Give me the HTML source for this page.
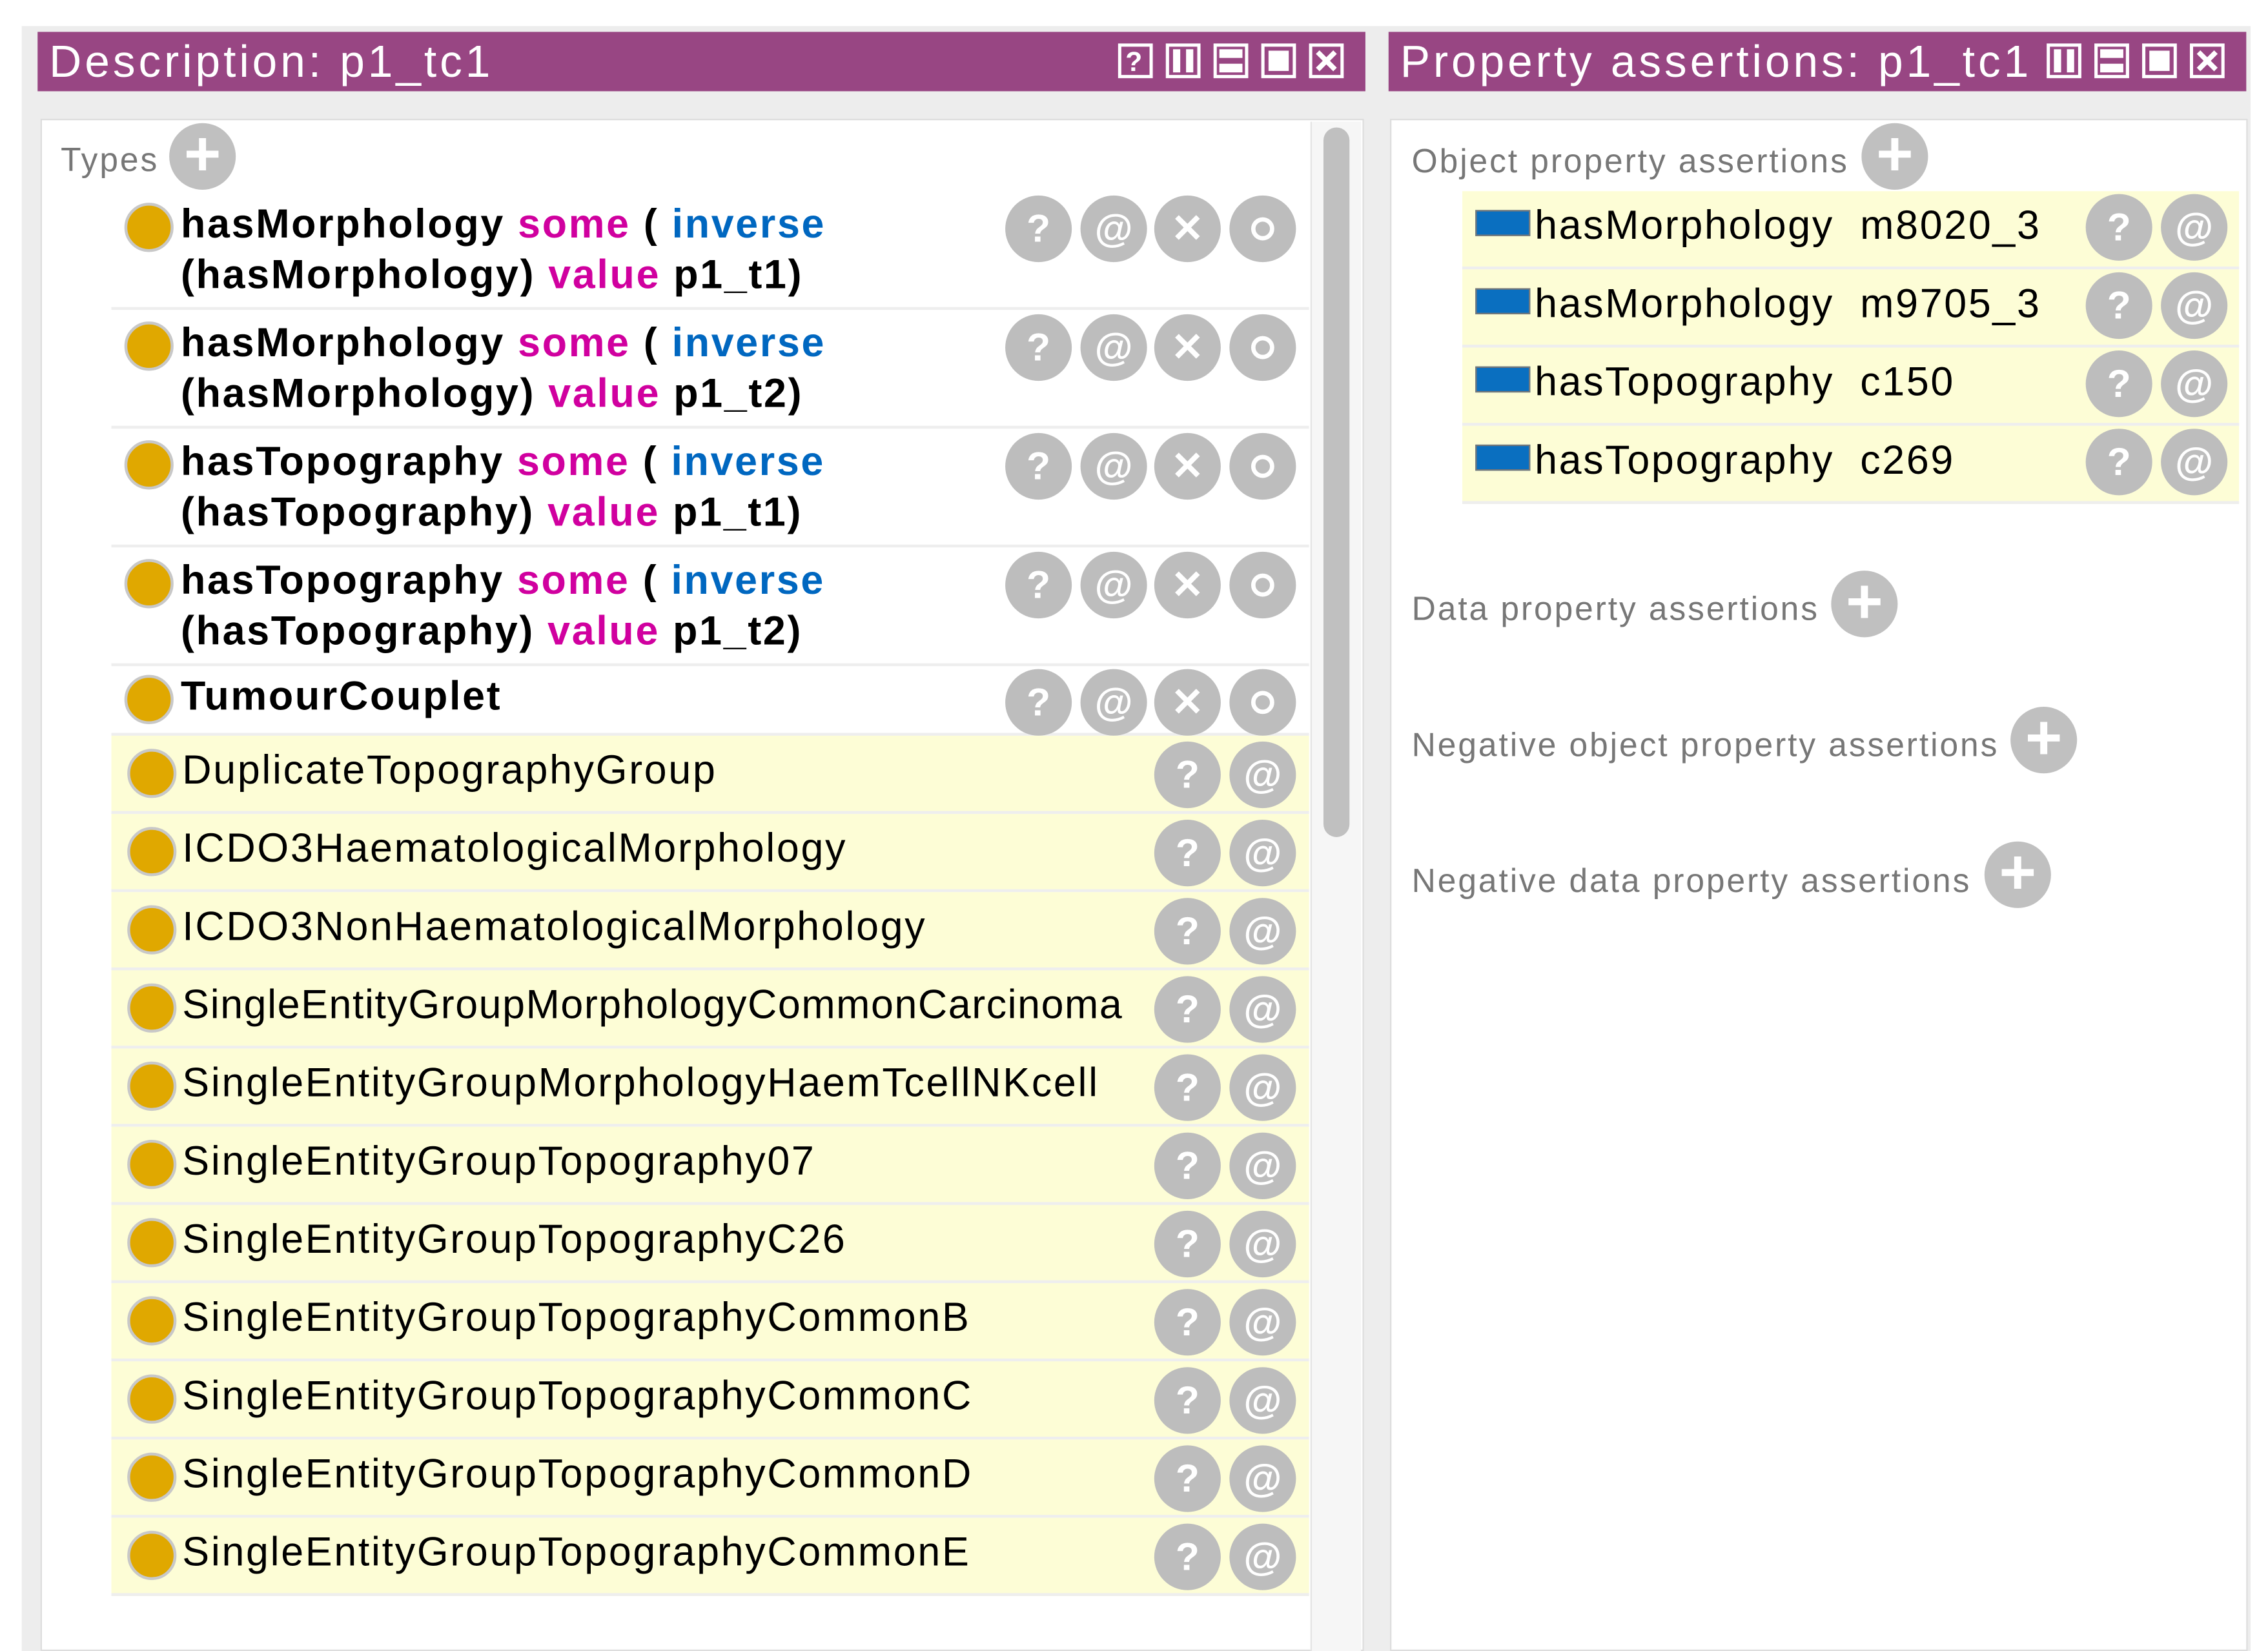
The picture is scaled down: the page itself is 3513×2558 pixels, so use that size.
<!DOCTYPE html>
<html><head><meta charset="utf-8"><style>
html,body{margin:0;padding:0;background:#fff;width:3513px;height:2558px;overflow:hidden}
#w{position:absolute;left:0;top:0;width:1568px;height:1140px;transform-origin:0 0;transform:scale(2.2404,2.2439);font-family:"Liberation Sans",sans-serif}
.a{position:absolute}
.hdr{position:absolute;background:#984683;color:#fff;font-size:31px;line-height:41px;padding-left:8px;box-sizing:border-box;white-space:nowrap;letter-spacing:2.2px}
.ic{position:absolute;top:8px;width:24px;height:24px}
.b{position:absolute;width:46px;height:46px;border-radius:50%;background:#bdbdbd;color:#fff;font-size:27px;line-height:46px;text-align:center;font-weight:bold}
.ring{position:absolute;left:15px;top:15px;width:10px;height:10px;border:3px solid #fff;border-radius:50%}
.dot{position:absolute;width:30px;height:30px;border-radius:50%;background:#e0a800;border:2px solid #c8c8c8}
.row{position:absolute;left:77px;width:828px;border-bottom:2px solid #eee;box-sizing:border-box}
.t{position:absolute;left:48px;font-size:28px;color:#000;white-space:nowrap;letter-spacing:1.2px}
.t.bo{font-weight:bold;letter-spacing:1.2px}
.k{color:#d0009f}.v{color:#0067c0}
.lab{position:absolute;font-size:23px;color:#777;white-space:nowrap;letter-spacing:1.3px}
.plus{position:absolute;width:46px;height:46px;border-radius:50%;background:#c0c0c0;color:#fff;font-size:44px;line-height:44px;text-align:center;font-weight:bold}
.pr{position:absolute;left:1011px;width:537px;height:54px;background:#fdfdd6;border-bottom:2px solid #eee;box-sizing:border-box}
.sq{position:absolute;left:9px;top:13px;width:36px;height:16px;background:#0a6fc0;border:1px solid #777}
</style></head><body><div id="w">
<svg width="0" height="0" style="position:absolute"><defs>
<g id="iq"><rect x="1" y="1" width="22" height="22" fill="none" stroke="#fff" stroke-width="2.5"/><text x="12" y="19" font-size="19" font-weight="bold" fill="#fff" text-anchor="middle" font-family="Liberation Sans">?</text></g>
<g id="iv"><rect x="1" y="1" width="22" height="22" fill="none" stroke="#fff" stroke-width="2.5"/><rect x="5" y="4" width="5" height="16" fill="#fff"/><rect x="14" y="4" width="5" height="16" fill="#fff"/></g>
<g id="ih"><rect x="1" y="1" width="22" height="22" fill="none" stroke="#fff" stroke-width="2.5"/><rect x="4" y="4" width="16" height="6" fill="#fff"/><rect x="4" y="14" width="16" height="6" fill="#fff"/></g>
<g id="im"><rect x="1" y="1" width="22" height="22" fill="none" stroke="#fff" stroke-width="2.5"/><rect x="5" y="5" width="14" height="14" fill="#fff"/></g>
<g id="ix"><rect x="1" y="1" width="22" height="22" fill="none" stroke="#fff" stroke-width="2.5"/><path d="M6 6L18 18M18 6L6 18" stroke="#fff" stroke-width="3.5"/></g>
</defs></svg>
<div class="a" style="left:15px;top:18px;width:1541px;height:1122px;background:#ededed"></div>
<div class="hdr" style="left:26px;top:22px;width:918px">Description: p1_tc1
<svg class="ic" style="left:747px"><use href="#iq"/></svg><svg class="ic" style="left:780px"><use href="#iv"/></svg><svg class="ic" style="left:813px"><use href="#ih"/></svg><svg class="ic" style="left:846px"><use href="#im"/></svg><svg class="ic" style="left:879px"><use href="#ix"/></svg></div>
<div class="hdr" style="left:960px;top:22px;width:593px">Property assertions: p1_tc1
<svg class="ic" style="left:455px"><use href="#iv"/></svg><svg class="ic" style="left:488px"><use href="#ih"/></svg><svg class="ic" style="left:521px"><use href="#im"/></svg><svg class="ic" style="left:554px"><use href="#ix"/></svg></div>
<div class="a" style="left:28px;top:82px;width:915px;height:1058px;background:#fff;border:1px solid #ddd;box-sizing:border-box"></div>
<div class="a" style="left:906px;top:84px;width:34px;height:1056px;background:#f6f6f6;border-left:1px solid #e4e4e4"></div>
<div class="a" style="left:915px;top:88px;width:18px;height:490px;background:#c0c0c0;border-radius:9px"></div>
<div class="a" style="left:961px;top:82px;width:593px;height:1058px;background:#fff;border:1px solid #ddd;box-sizing:border-box"></div>
<div class="lab" style="left:42px;top:97px">Types</div><div class="plus" style="left:117px;top:85px">+</div>

<div class="row" style="top:135px;height:79px"><div class="dot" style="left:9px;top:5px"></div><div class="t bo" style="top:2px;line-height:35px">hasMorphology <span class="k">some</span> ( <span class="v">inverse</span><br>(hasMorphology) <span class="k">value</span> p1_t1)</div>
<div class="b" style="left:618px;top:0px">?</div><div class="b" style="left:670px;top:0">@</div><div class="b" style="left:721px;top:0">✕</div><div class="b" style="left:773px;top:0"><div class="ring"></div></div></div>
<div class="row" style="top:214px;height:82px"><div class="dot" style="left:9px;top:8px"></div><div class="t bo" style="top:5px;line-height:35px">hasMorphology <span class="k">some</span> ( <span class="v">inverse</span><br>(hasMorphology) <span class="k">value</span> p1_t2)</div>
<div class="b" style="left:618px;top:3px">?</div><div class="b" style="left:670px;top:3px">@</div><div class="b" style="left:721px;top:3px">✕</div><div class="b" style="left:773px;top:3px"><div class="ring"></div></div></div>
<div class="row" style="top:296px;height:82px"><div class="dot" style="left:9px;top:8px"></div><div class="t bo" style="top:5px;line-height:35px">hasTopography <span class="k">some</span> ( <span class="v">inverse</span><br>(hasTopography) <span class="k">value</span> p1_t1)</div>
<div class="b" style="left:618px;top:3px">?</div><div class="b" style="left:670px;top:3px">@</div><div class="b" style="left:721px;top:3px">✕</div><div class="b" style="left:773px;top:3px"><div class="ring"></div></div></div>
<div class="row" style="top:378px;height:82px"><div class="dot" style="left:9px;top:8px"></div><div class="t bo" style="top:5px;line-height:35px">hasTopography <span class="k">some</span> ( <span class="v">inverse</span><br>(hasTopography) <span class="k">value</span> p1_t2)</div>
<div class="b" style="left:618px;top:3px">?</div><div class="b" style="left:670px;top:3px">@</div><div class="b" style="left:721px;top:3px">✕</div><div class="b" style="left:773px;top:3px"><div class="ring"></div></div></div>
<div class="row" style="top:460px;height:48px"><div class="dot" style="left:9px;top:6px"></div><div class="t bo" style="top:3px;line-height:35px">TumourCouplet</div>
<div class="b" style="left:618px;top:2px">?</div><div class="b" style="left:670px;top:2px">@</div><div class="b" style="left:721px;top:2px">✕</div><div class="b" style="left:773px;top:2px"><div class="ring"></div></div></div>

<div class="row" style="top:508px;height:54px;background:#fdfdd6"><div class="dot" style="left:11px;top:9px"></div><div class="t" style="left:49px;top:8px">DuplicateTopographyGroup</div><div class="b" style="left:721px;top:4px">?</div><div class="b" style="left:773px;top:4px">@</div></div>
<div class="row" style="top:562px;height:54px;background:#fdfdd6"><div class="dot" style="left:11px;top:9px"></div><div class="t" style="left:49px;top:8px">ICDO3HaematologicalMorphology</div><div class="b" style="left:721px;top:4px">?</div><div class="b" style="left:773px;top:4px">@</div></div>
<div class="row" style="top:616px;height:54px;background:#fdfdd6"><div class="dot" style="left:11px;top:9px"></div><div class="t" style="left:49px;top:8px">ICDO3NonHaematologicalMorphology</div><div class="b" style="left:721px;top:4px">?</div><div class="b" style="left:773px;top:4px">@</div></div>
<div class="row" style="top:670px;height:54px;background:#fdfdd6"><div class="dot" style="left:11px;top:9px"></div><div class="t" style="left:49px;top:8px;letter-spacing:0.7px">SingleEntityGroupMorphologyCommonCarcinoma</div><div class="b" style="left:721px;top:4px">?</div><div class="b" style="left:773px;top:4px">@</div></div>
<div class="row" style="top:724px;height:54px;background:#fdfdd6"><div class="dot" style="left:11px;top:9px"></div><div class="t" style="left:49px;top:8px">SingleEntityGroupMorphologyHaemTcellNKcell</div><div class="b" style="left:721px;top:4px">?</div><div class="b" style="left:773px;top:4px">@</div></div>
<div class="row" style="top:778px;height:54px;background:#fdfdd6"><div class="dot" style="left:11px;top:9px"></div><div class="t" style="left:49px;top:8px">SingleEntityGroupTopography07</div><div class="b" style="left:721px;top:4px">?</div><div class="b" style="left:773px;top:4px">@</div></div>
<div class="row" style="top:832px;height:54px;background:#fdfdd6"><div class="dot" style="left:11px;top:9px"></div><div class="t" style="left:49px;top:8px">SingleEntityGroupTopographyC26</div><div class="b" style="left:721px;top:4px">?</div><div class="b" style="left:773px;top:4px">@</div></div>
<div class="row" style="top:886px;height:54px;background:#fdfdd6"><div class="dot" style="left:11px;top:9px"></div><div class="t" style="left:49px;top:8px">SingleEntityGroupTopographyCommonB</div><div class="b" style="left:721px;top:4px">?</div><div class="b" style="left:773px;top:4px">@</div></div>
<div class="row" style="top:940px;height:54px;background:#fdfdd6"><div class="dot" style="left:11px;top:9px"></div><div class="t" style="left:49px;top:8px">SingleEntityGroupTopographyCommonC</div><div class="b" style="left:721px;top:4px">?</div><div class="b" style="left:773px;top:4px">@</div></div>
<div class="row" style="top:994px;height:54px;background:#fdfdd6"><div class="dot" style="left:11px;top:9px"></div><div class="t" style="left:49px;top:8px">SingleEntityGroupTopographyCommonD</div><div class="b" style="left:721px;top:4px">?</div><div class="b" style="left:773px;top:4px">@</div></div>
<div class="row" style="top:1048px;height:54px;background:#fdfdd6"><div class="dot" style="left:11px;top:9px"></div><div class="t" style="left:49px;top:8px">SingleEntityGroupTopographyCommonE</div><div class="b" style="left:721px;top:4px">?</div><div class="b" style="left:773px;top:4px">@</div></div>

<div class="lab" style="left:976px;top:98px">Object property assertions</div><div class="plus" style="left:1287px;top:85px">+</div>
<div class="pr" style="top:132px"><div class="sq"></div><div class="t" style="left:50px;top:8px">hasMorphology&nbsp; m8020_3</div><div class="b" style="left:431px;top:2px">?</div><div class="b" style="left:483px;top:2px">@</div></div>
<div class="pr" style="top:186px"><div class="sq"></div><div class="t" style="left:50px;top:8px">hasMorphology&nbsp; m9705_3</div><div class="b" style="left:431px;top:2px">?</div><div class="b" style="left:483px;top:2px">@</div></div>
<div class="pr" style="top:240px"><div class="sq"></div><div class="t" style="left:50px;top:8px">hasTopography&nbsp; c150</div><div class="b" style="left:431px;top:2px">?</div><div class="b" style="left:483px;top:2px">@</div></div>
<div class="pr" style="top:294px"><div class="sq"></div><div class="t" style="left:50px;top:8px">hasTopography&nbsp; c269</div><div class="b" style="left:431px;top:2px">?</div><div class="b" style="left:483px;top:2px">@</div></div>
<div class="lab" style="left:976px;top:407px">Data property assertions</div><div class="plus" style="left:1266px;top:394px">+</div>
<div class="lab" style="left:976px;top:501px">Negative object property assertions</div><div class="plus" style="left:1390px;top:488px">+</div>
<div class="lab" style="left:976px;top:595px">Negative data property assertions</div><div class="plus" style="left:1372px;top:581px">+</div>
</div></body></html>
